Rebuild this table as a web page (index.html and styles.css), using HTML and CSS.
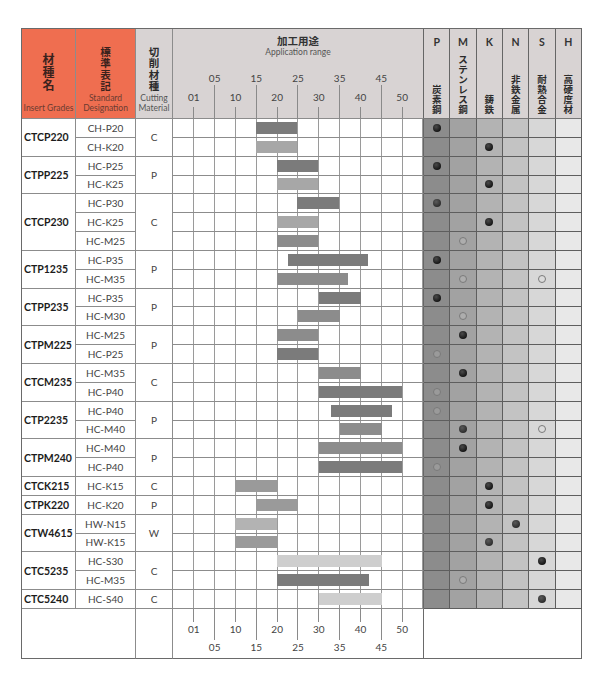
FILE: index.html
```
<!DOCTYPE html>
<html lang="ja">
<head>
<meta charset="utf-8">
<title>材種選定表</title>
<link rel="stylesheet" href="styles.css">
</head>
<body>
<div class="page">
  <div class="tbl">
    <div class="hd org c1"><span class="jv">材種名</span><span class="en">Insert Grades</span></div>
    <div class="hd org c2"><span class="jv">標準表記</span><span class="en">Standard<br>Designation</span></div>
    <div class="hd gry c3"><span class="jv">切削材種</span><span class="en">Cutting<br>Material</span></div>
    <div class="app">
      <div class="app-t">加工用途</div>
      <div class="app-s">Application range</div>
      <div class="ticks">
        <div class="tk near"><span>01</span><i class="ln"></i></div>
        <div class="tk far"><span>05</span><i class="ln"></i></div>
        <div class="tk near"><span>10</span><i class="ln"></i></div>
        <div class="tk far"><span>15</span><i class="ln"></i></div>
        <div class="tk near"><span>20</span><i class="ln"></i></div>
        <div class="tk far"><span>25</span><i class="ln"></i></div>
        <div class="tk near"><span>30</span><i class="ln"></i></div>
        <div class="tk far"><span>35</span><i class="ln"></i></div>
        <div class="tk near"><span>40</span><i class="ln"></i></div>
        <div class="tk far"><span>45</span><i class="ln"></i></div>
        <div class="tk near"><span>50</span><i class="ln"></i></div>
      </div>
    </div>
    <div class="isoh"><b>P</b><span class="jv">炭素鋼</span></div>
    <div class="isoh"><b>M</b><span class="jv">ステンレス鋼</span></div>
    <div class="isoh"><b>K</b><span class="jv">鋳鉄</span></div>
    <div class="isoh"><b>N</b><span class="jv">非鉄金属</span></div>
    <div class="isoh"><b>S</b><span class="jv">耐熱合金</span></div>
    <div class="isoh"><b>H</b><span class="jv">高硬度材</span></div>

    <!-- CTCP220 -->
    <div class="grade r2">CTCP220</div><div class="des">CH-P20</div><div class="mat r2">C</div>
    <div class="bars"><i class="bar dk" style="margin-left:83px;width:41px"></i></div>
    <div class="iso p"><i class="dot"></i></div><div class="iso m"></div><div class="iso k"></div><div class="iso n"></div><div class="iso s"></div><div class="iso h"></div>
    <div class="des">CH-K20</div>
    <div class="bars"><i class="bar lt" style="margin-left:83px;width:41px"></i></div>
    <div class="iso p"></div><div class="iso m"></div><div class="iso k"><i class="dot"></i></div><div class="iso n"></div><div class="iso s"></div><div class="iso h"></div>

    <!-- CTPP225 -->
    <div class="grade r2">CTPP225</div><div class="des">HC-P25</div><div class="mat r2">P</div>
    <div class="bars"><i class="bar dk" style="margin-left:104px;width:41px"></i></div>
    <div class="iso p"><i class="dot"></i></div><div class="iso m"></div><div class="iso k"></div><div class="iso n"></div><div class="iso s"></div><div class="iso h"></div>
    <div class="des">HC-K25</div>
    <div class="bars"><i class="bar lt" style="margin-left:104px;width:41px"></i></div>
    <div class="iso p"></div><div class="iso m"></div><div class="iso k"><i class="dot"></i></div><div class="iso n"></div><div class="iso s"></div><div class="iso h"></div>

    <!-- CTCP230 -->
    <div class="grade r3">CTCP230</div><div class="des">HC-P30</div><div class="mat r3">C</div>
    <div class="bars"><i class="bar dk" style="margin-left:124px;width:42px"></i></div>
    <div class="iso p"><i class="dot g"></i></div><div class="iso m"></div><div class="iso k"></div><div class="iso n"></div><div class="iso s"></div><div class="iso h"></div>
    <div class="des">HC-K25</div>
    <div class="bars"><i class="bar lt" style="margin-left:104px;width:41px"></i></div>
    <div class="iso p"></div><div class="iso m"></div><div class="iso k"><i class="dot"></i></div><div class="iso n"></div><div class="iso s"></div><div class="iso h"></div>
    <div class="des">HC-M25</div>
    <div class="bars"><i class="bar md" style="margin-left:104px;width:41px"></i></div>
    <div class="iso p"></div><div class="iso m"><i class="dot o"></i></div><div class="iso k"></div><div class="iso n"></div><div class="iso s"></div><div class="iso h"></div>

    <!-- CTP1235 -->
    <div class="grade r2">CTP1235</div><div class="des">HC-P35</div><div class="mat r2">P</div>
    <div class="bars"><i class="bar dk" style="margin-left:115px;width:80px"></i></div>
    <div class="iso p"><i class="dot"></i></div><div class="iso m"></div><div class="iso k"></div><div class="iso n"></div><div class="iso s"></div><div class="iso h"></div>
    <div class="des">HC-M35</div>
    <div class="bars"><i class="bar md" style="margin-left:104px;width:71px"></i></div>
    <div class="iso p"></div><div class="iso m"><i class="dot o"></i></div><div class="iso k"></div><div class="iso n"></div><div class="iso s"><i class="dot o"></i></div><div class="iso h"></div>

    <!-- CTPP235 -->
    <div class="grade r2">CTPP235</div><div class="des">HC-P35</div><div class="mat r2">P</div>
    <div class="bars"><i class="bar dk" style="margin-left:146px;width:42px"></i></div>
    <div class="iso p"><i class="dot"></i></div><div class="iso m"></div><div class="iso k"></div><div class="iso n"></div><div class="iso s"></div><div class="iso h"></div>
    <div class="des">HC-M30</div>
    <div class="bars"><i class="bar md" style="margin-left:125px;width:42px"></i></div>
    <div class="iso p"></div><div class="iso m"><i class="dot o"></i></div><div class="iso k"></div><div class="iso n"></div><div class="iso s"></div><div class="iso h"></div>

    <!-- CTPM225 -->
    <div class="grade r2">CTPM225</div><div class="des">HC-M25</div><div class="mat r2">P</div>
    <div class="bars"><i class="bar md" style="margin-left:104px;width:41px"></i></div>
    <div class="iso p"></div><div class="iso m"><i class="dot"></i></div><div class="iso k"></div><div class="iso n"></div><div class="iso s"></div><div class="iso h"></div>
    <div class="des">HC-P25</div>
    <div class="bars"><i class="bar dk" style="margin-left:104px;width:41px"></i></div>
    <div class="iso p"><i class="dot o"></i></div><div class="iso m"></div><div class="iso k"></div><div class="iso n"></div><div class="iso s"></div><div class="iso h"></div>

    <!-- CTCM235 -->
    <div class="grade r2">CTCM235</div><div class="des">HC-M35</div><div class="mat r2">C</div>
    <div class="bars"><i class="bar md" style="margin-left:146px;width:42px"></i></div>
    <div class="iso p"></div><div class="iso m"><i class="dot"></i></div><div class="iso k"></div><div class="iso n"></div><div class="iso s"></div><div class="iso h"></div>
    <div class="des">HC-P40</div>
    <div class="bars"><i class="bar dk" style="margin-left:146px;width:83px"></i></div>
    <div class="iso p"><i class="dot o"></i></div><div class="iso m"></div><div class="iso k"></div><div class="iso n"></div><div class="iso s"></div><div class="iso h"></div>

    <!-- CTP2235 -->
    <div class="grade r2">CTP2235</div><div class="des">HC-P40</div><div class="mat r2">P</div>
    <div class="bars"><i class="bar dk" style="margin-left:158px;width:61px"></i></div>
    <div class="iso p"><i class="dot o"></i></div><div class="iso m"></div><div class="iso k"></div><div class="iso n"></div><div class="iso s"></div><div class="iso h"></div>
    <div class="des">HC-M40</div>
    <div class="bars"><i class="bar md" style="margin-left:167px;width:42px"></i></div>
    <div class="iso p"></div><div class="iso m"><i class="dot g"></i></div><div class="iso k"></div><div class="iso n"></div><div class="iso s"><i class="dot o"></i></div><div class="iso h"></div>

    <!-- CTPM240 -->
    <div class="grade r2">CTPM240</div><div class="des">HC-M40</div><div class="mat r2">P</div>
    <div class="bars"><i class="bar md" style="margin-left:146px;width:83px"></i></div>
    <div class="iso p"></div><div class="iso m"><i class="dot"></i></div><div class="iso k"></div><div class="iso n"></div><div class="iso s"></div><div class="iso h"></div>
    <div class="des">HC-P40</div>
    <div class="bars"><i class="bar dk" style="margin-left:146px;width:83px"></i></div>
    <div class="iso p"><i class="dot o"></i></div><div class="iso m"></div><div class="iso k"></div><div class="iso n"></div><div class="iso s"></div><div class="iso h"></div>

    <!-- CTCK215 -->
    <div class="grade">CTCK215</div><div class="des">HC-K15</div><div class="mat">C</div>
    <div class="bars"><i class="bar m2" style="margin-left:62px;width:42px"></i></div>
    <div class="iso p"></div><div class="iso m"></div><div class="iso k"><i class="dot"></i></div><div class="iso n"></div><div class="iso s"></div><div class="iso h"></div>

    <!-- CTPK220 -->
    <div class="grade">CTPK220</div><div class="des">HC-K20</div><div class="mat">P</div>
    <div class="bars"><i class="bar m2" style="margin-left:83px;width:41px"></i></div>
    <div class="iso p"></div><div class="iso m"></div><div class="iso k"><i class="dot"></i></div><div class="iso n"></div><div class="iso s"></div><div class="iso h"></div>

    <!-- CTW4615 -->
    <div class="grade r2">CTW4615</div><div class="des">HW-N15</div><div class="mat r2">W</div>
    <div class="bars"><i class="bar l2" style="margin-left:62px;width:42px"></i></div>
    <div class="iso p"></div><div class="iso m"></div><div class="iso k"></div><div class="iso n"><i class="dot g"></i></div><div class="iso s"></div><div class="iso h"></div>
    <div class="des">HW-K15</div>
    <div class="bars"><i class="bar m2" style="margin-left:62px;width:42px"></i></div>
    <div class="iso p"></div><div class="iso m"></div><div class="iso k"><i class="dot g"></i></div><div class="iso n"></div><div class="iso s"></div><div class="iso h"></div>

    <!-- CTC5235 -->
    <div class="grade r2">CTC5235</div><div class="des">HC-S30</div><div class="mat r2">C</div>
    <div class="bars"><i class="bar vl" style="margin-left:104px;width:105px"></i></div>
    <div class="iso p"></div><div class="iso m"></div><div class="iso k"></div><div class="iso n"></div><div class="iso s"><i class="dot"></i></div><div class="iso h"></div>
    <div class="des">HC-M35</div>
    <div class="bars"><i class="bar dk" style="margin-left:104px;width:92px"></i></div>
    <div class="iso p"></div><div class="iso m"><i class="dot o"></i></div><div class="iso k"></div><div class="iso n"></div><div class="iso s"></div><div class="iso h"></div>

    <!-- CTC5240 -->
    <div class="grade">CTC5240</div><div class="des">HC-S40</div><div class="mat">C</div>
    <div class="bars"><i class="bar vl" style="margin-left:146px;width:63px"></i></div>
    <div class="iso p"></div><div class="iso m"></div><div class="iso k"></div><div class="iso n"></div><div class="iso s"><i class="dot g"></i></div><div class="iso h"></div>

    <!-- footer -->
    <div class="fl"></div>
    <div class="fm"></div>
    <div class="foot">
      <div class="ticks">
        <div class="tk near"><i class="ln"></i><span>01</span></div>
        <div class="tk far"><i class="ln"></i><span>05</span></div>
        <div class="tk near"><i class="ln"></i><span>10</span></div>
        <div class="tk far"><i class="ln"></i><span>15</span></div>
        <div class="tk near"><i class="ln"></i><span>20</span></div>
        <div class="tk far"><i class="ln"></i><span>25</span></div>
        <div class="tk near"><i class="ln"></i><span>30</span></div>
        <div class="tk far"><i class="ln"></i><span>35</span></div>
        <div class="tk near"><i class="ln"></i><span>40</span></div>
        <div class="tk far"><i class="ln"></i><span>45</span></div>
        <div class="tk near"><i class="ln"></i><span>50</span></div>
      </div>
    </div>
    <div class="fr"></div>
  </div>
</div>
</body>
</html>
```
FILE: styles.css
```
* { box-sizing: border-box; }

body {
  margin: 0;
  background: #fff;
  font-family: Lato, "Open Sans", "Noto Sans CJK JP", sans-serif;
  color: #333;
}

.page {
  padding: 28px 0 0 21px;
}

.tbl {
  display: grid;
  width: 561px;
  grid-template-columns: 54px 60px 37px 251px repeat(6, 1fr);
  grid-template-rows: 90px repeat(26, 18.85px) 50px;
  border-left: 1px solid #6a6a6a;
  border-top: 1px solid #6a6a6a;
}

.tbl > div {
  min-width: 0;
  border-right: 1px solid #8c8c8c;
  border-bottom: 1px solid #8c8c8c;
}

/* ---------- header ---------- */
.hd {
  display: flex;
  flex-direction: column;
  align-items: center;
  justify-content: flex-end;
  padding-bottom: 5px;
}

.org { background: #ef6e50; }
.gry { background: #d8d3d3; }

/* vertical Japanese labels: one character per line */
.jv {
  display: block;
  width: 1em;
  font-family: "Noto Sans CJK JP", sans-serif;
  font-weight: 700;
  text-align: center;
  word-break: break-all;
  color: #2b2b2b;
}

.c1 .jv { font-size: 12px; line-height: 13.3px; margin-bottom: 12px; }
.c2 .jv, .c3 .jv { font-size: 10.5px; line-height: 11.2px; margin-bottom: 3px; }
.org .jv { color: #3a221d; }

.en {
  font-size: 8.5px;
  line-height: 9.5px;
  text-align: center;
  white-space: nowrap;
  color: #555;
}
.org .en { color: #6b3b31; }

.app {
  display: flex;
  flex-direction: column;
  background: #d8d3d3;
  border-right-color: #666 !important;
}

.app-t {
  margin-top: 6px;
  font-family: "Noto Sans CJK JP", sans-serif;
  font-weight: 700;
  font-size: 10.5px;
  line-height: 12px;
  text-align: center;
  color: #333;
}

.app-s {
  font-size: 8.5px;
  line-height: 10px;
  text-align: center;
  color: #555;
}

.ticks {
  flex: 1;
  height: 100%;
  display: grid;
  grid-template-columns: repeat(11, 1fr);
  padding: 0 10.42px;
}

.tk {
  display: flex;
  flex-direction: column;
  align-items: center;
  font-size: 10px;
  line-height: 12px;
  color: #444;
}

.tk .ln {
  display: block;
  width: 1px;
  background: #8a8a8a;
}

.app .tk .ln { flex: 1; }
.app .far { padding-top: 15px; }
.app .far .ln { margin-top: 1px; }
.app .near { padding-top: 34px; }
.app .near .ln { margin-top: 4px; }

.isoh {
  display: flex;
  flex-direction: column;
  align-items: center;
  padding: 7px 0 4px;
  background: #d8d3d3;
  border-right-color: #666 !important;
  border-bottom-color: #777 !important;
}

.isoh b {
  font-family: Lato, sans-serif;
  font-weight: 700;
  font-size: 10.5px;
  line-height: 12px;
  color: #333;
}

.isoh .jv {
  margin-top: auto;
  font-size: 9.5px;
  line-height: 10px;
}

/* ---------- body ---------- */
.grade {
  display: flex;
  align-items: center;
  padding-left: 2px;
  font-weight: 700;
  font-size: 10.5px;
  color: #1c1c1c;
}

.des, .mat {
  display: flex;
  align-items: center;
  justify-content: center;
  font-size: 10px;
  color: #444;
}

.r2 { grid-row: span 2; }
.r3 { grid-row: span 3; }

.bars {
  display: flex;
  align-items: center;
  border-right-color: #666 !important;
  background: repeating-linear-gradient(90deg,
    #9a9a9a 0 0.5px,
    transparent 0.5px 20.333px,
    #9a9a9a 20.333px 20.8333px);
}

.bar {
  display: block;
  flex: none;
  height: 12px;
}

.dk { background: #7b7b7b; }
.md { background: #8c8c8c; }
.m2 { background: #9a9a9a; }
.lt { background: #a7a7a7; }
.l2 { background: #b3b3b3; }
.vl { background: #cecece; }

.iso {
  display: flex;
  align-items: center;
  justify-content: center;
  border-right-color: #5e5e5e !important;
  border-bottom-color: #5e5e5e !important;
}

.p { background: #8c8c8c; }
.m { background: #a2a2a2; }
.k { background: #b3b3b3; }
.n { background: #c3c3c3; }
.s { background: #d7d7d7; }
.h { background: #e8e8e8; }

.dot {
  display: block;
  width: 8px;
  height: 8px;
  border-radius: 50%;
  background: radial-gradient(circle at 40% 35%, #4a4a4a, #161616 70%);
}

.dot.g { background: radial-gradient(circle at 40% 35%, #5a5a5a, #2e2e2e 70%); }

.dot.o {
  background: rgba(255, 255, 255, 0.12);
  border: 1px solid #7a7a7a;
}

/* ---------- footer ---------- */
.fl { grid-column: span 2; border-bottom-color: #6a6a6a !important; }
.fm { border-bottom-color: #6a6a6a !important; }

.foot {
  display: flex;
  border-right-color: #6a6a6a !important;
  border-bottom-color: #6a6a6a !important;
}

.foot .ticks { align-items: start; }
.foot .tk span { margin-top: 1px; }
.foot .near .ln { height: 13px; }
.foot .far .ln { height: 31px; }

.fr {
  grid-column: span 6;
  border-right-color: #6a6a6a !important;
  border-bottom-color: #6a6a6a !important;
}
```
